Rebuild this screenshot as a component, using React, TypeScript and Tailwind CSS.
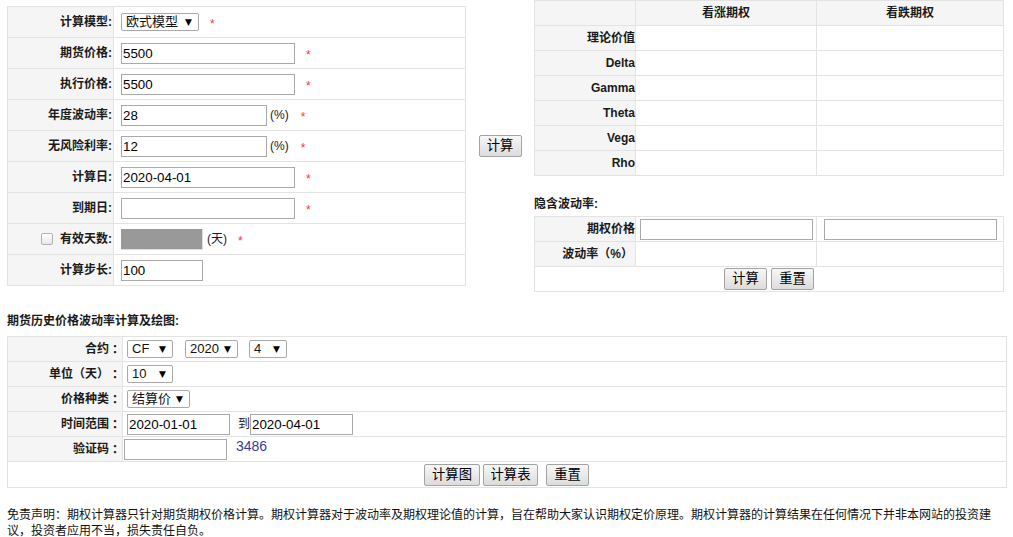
import React from "react";

const FONT = "font-['Liberation_Sans','Noto_Sans_CJK_SC',sans-serif]";

function Colon() {
  return <span className="font-['Noto_Sans_CJK_JP',sans-serif]">：</span>;
}

function Star({ className = "" }: { className?: string }) {
  return <span className={`text-[12px] leading-[12px] text-[#ff3333] pt-[3px] ${className}`}>*</span>;
}

function Inp({ w, value = "" }: { w: string; value?: string }) {
  return (
    <input
      readOnly
      value={value}
      className={`${w} h-[21px] shrink-0 border border-[#a9a9a9] bg-white px-[1px] text-[13.33px] text-black outline-none ${FONT}`}
    />
  );
}

function Sel({ w, text, className = "" }: { w: string; text: string; className?: string }) {
  return (
    <div
      className={`${w} ${className} flex h-[18px] shrink-0 items-center justify-between rounded-[2px] border border-[#a9a9a9] bg-white pl-[4px] pr-[6px] text-[13px] leading-[16px] text-[#111]`}
    >
      <span>{text}</span>
      <span className="text-[9px] leading-[9px] text-black font-['DejaVu_Sans',sans-serif]">▼</span>
    </div>
  );
}

function Btn({ w, text, className = "" }: { w: string; text: string; className?: string }) {
  return (
    <button
      type="button"
      className={`${w} ${className} h-[22px] shrink-0 rounded-[2px] border border-[#a3a3a3] bg-linear-to-b from-[#f7f7f7] to-[#dcdcdc] text-[13.33px] leading-[18px] text-black`}
    >
      {text}
    </button>
  );
}

function LRow({ label, children }: { label: React.ReactNode; children: React.ReactNode }) {
  return (
    <div className="flex h-[31px] border-b border-[#e3e3e3]">
      <div className="flex w-[106px] shrink-0 items-center justify-end border-r border-[#e3e3e3] bg-[#f5f5f5] pr-[1px] font-bold">
        {label}
      </div>
      <div className="flex flex-1 items-center pl-[7px]">{children}</div>
    </div>
  );
}

function GRow({ label, header = false }: { label: string; header?: boolean }) {
  return (
    <div className={`flex h-[25px] border-b border-[#e3e3e3] ${header ? "bg-[#f5f5f5]" : ""}`}>
      <div className="flex w-[101px] shrink-0 items-center justify-end border-r border-[#e3e3e3] bg-[#f5f5f5] font-bold">
        {label}
      </div>
      <div className="flex w-[181px] shrink-0 items-center justify-center border-r border-[#e3e3e3] font-bold">
        {header ? "看涨期权" : ""}
      </div>
      <div className="flex flex-1 items-center justify-center font-bold">{header ? "看跌期权" : ""}</div>
    </div>
  );
}

function BRow({ label, children, pl = "pl-[4px]" }: { label: string; children: React.ReactNode; pl?: string }) {
  return (
    <div className="flex h-[25px] border-b border-[#e3e3e3]">
      <div className="flex w-[115px] shrink-0 items-center justify-end border-r border-[#e3e3e3] bg-[#f5f5f5] pr-[1px] font-bold">
        {label}
        <Colon />
      </div>
      <div className={`flex flex-1 items-center ${pl}`}>{children}</div>
    </div>
  );
}

export default function App() {
  return (
    <div className={`min-h-[537px] w-[1013px] bg-white pl-[7px] text-[12px] leading-[16px] text-[#1a1a1a] ${FONT}`}>
      {/* top section */}
      <div className="flex items-start">
        {/* left form */}
        <div className="mt-[6px] w-[459px] shrink-0 border-x border-t border-[#e3e3e3]">
          <LRow label="计算模型:">
            <Sel w="w-[78px]" text="欧式模型" />
            <Star className="ml-[11px]" />
          </LRow>
          <LRow label="期货价格:">
            <Inp w="w-[174px]" value="5500" />
            <Star className="ml-[11px]" />
          </LRow>
          <LRow label="执行价格:">
            <Inp w="w-[174px]" value="5500" />
            <Star className="ml-[11px]" />
          </LRow>
          <LRow label="年度波动率:">
            <Inp w="w-[146px]" value="28" />
            <span className="ml-[3px]">(%)</span>
            <Star className="ml-[12px]" />
          </LRow>
          <LRow label="无风险利率:">
            <Inp w="w-[146px]" value="12" />
            <span className="ml-[3px]">(%)</span>
            <Star className="ml-[12px]" />
          </LRow>
          <LRow label="计算日:">
            <Inp w="w-[174px]" value="2020-04-01" />
            <Star className="ml-[11px]" />
          </LRow>
          <LRow label="到期日:">
            <Inp w="w-[174px]" value="" />
            <Star className="ml-[11px]" />
          </LRow>
          <LRow
            label={
              <span className="flex items-center">
                <span className="mr-[7px] inline-block h-[12px] w-[12px] rounded-[2px] border border-[#b0b0b0] bg-linear-to-b from-[#ffffff] to-[#e8e8e8]" />
                有效天数:
              </span>
            }
          >
            <div className="h-[21px] w-[82px] shrink-0 border-r border-b border-[#dedede] bg-[#999999]" />
            <span className="ml-[4px]">(天)</span>
            <Star className="ml-[11px]" />
          </LRow>
          <LRow label="计算步长:">
            <Inp w="w-[82px]" value="100" />
          </LRow>
        </div>

        {/* middle button */}
        <div className="mt-[6px] flex h-[280px] w-[68px] shrink-0 items-center justify-center">
          <Btn w="w-[43px]" text="计算" />
        </div>

        {/* right column */}
        <div className="w-[470px] shrink-0">
          <div className="border-x border-t border-[#e3e3e3]">
            <GRow label="" header />
            <GRow label="理论价值" />
            <GRow label="Delta" />
            <GRow label="Gamma" />
            <GRow label="Theta" />
            <GRow label="Vega" />
            <GRow label="Rho" />
          </div>

          <div className="mt-[20px] mb-[4px] h-[16px] font-bold">隐含波动率:</div>

          <div className="border-x border-t border-[#e3e3e3]">
            <div className="flex h-[25px] border-b border-[#e3e3e3]">
              <div className="flex w-[101px] shrink-0 items-center justify-end border-r border-[#e3e3e3] bg-[#f5f5f5] font-bold">
                期权价格
              </div>
              <div className="flex w-[181px] shrink-0 items-center justify-center border-r border-[#e3e3e3]">
                <Inp w="w-[173px]" />
              </div>
              <div className="flex flex-1 items-center justify-center">
                <Inp w="w-[173px]" />
              </div>
            </div>
            <div className="flex h-[25px] border-b border-[#e3e3e3]">
              <div className="flex w-[101px] shrink-0 items-center justify-end border-r border-[#e3e3e3] bg-[#f5f5f5] pr-[2px] font-bold">
                波动率（%）
              </div>
              <div className="w-[181px] shrink-0 border-r border-[#e3e3e3]" />
              <div className="flex-1" />
            </div>
            <div className="flex h-[25px] items-center justify-center gap-[4px] border-b border-[#e3e3e3]">
              <Btn w="w-[43px]" text="计算" />
              <Btn w="w-[43px]" text="重置" />
            </div>
          </div>
        </div>
      </div>

      {/* history section */}
      <div className="mt-[21px] h-[16px] font-bold">期货历史价格波动率计算及绘图:</div>
      <div className="mt-[7px] w-[1000px] border-x border-t border-[#e3e3e3]">
        <BRow label="合约">
          <Sel w="w-[46px]" text="CF" className="mr-[12px]" />
          <Sel w="w-[53px]" text="2020" className="mr-[11px]" />
          <Sel w="w-[38px]" text="4" />
        </BRow>
        <BRow label="单位（天）">
          <Sel w="w-[46px]" text="10" />
        </BRow>
        <BRow label="价格种类">
          <Sel w="w-[63px]" text="结算价" />
        </BRow>
        <BRow label="时间范围">
          <Inp w="w-[103px]" value="2020-01-01" />
          <span className="ml-[8px]">到</span>
          <Inp w="w-[103px]" value="2020-04-01" />
        </BRow>
        <BRow label="验证码" pl="pl-[1px]">
          <Inp w="w-[103px]" />
          <span className="mb-[7px] ml-[9px] text-[14px] leading-[14px] text-[#3b3b9e] font-['Liberation_Sans',sans-serif]">
            3486
          </span>
        </BRow>
        <div className="flex h-[26px] items-center justify-center border-b border-[#e3e3e3] pr-[1px]">
          <Btn w="w-[56px]" text="计算图" />
          <Btn w="w-[55px]" text="计算表" className="ml-[3px]" />
          <Btn w="w-[43px]" text="重置" className="ml-[8px]" />
        </div>
      </div>

      {/* disclaimer */}
      <p className="mt-[19px] w-[1000px] text-[12px] leading-[16px] text-[#111]">
        免责声明：期权计算器只针对期货期权价格计算。期权计算器对于波动率及期权理论值的计算，旨在帮助大家认识期权定价原理。期权计算器的计算结果在任何情况下并非本网站的投资建议，投资者应用不当，损失责任自负。
      </p>
    </div>
  );
}
